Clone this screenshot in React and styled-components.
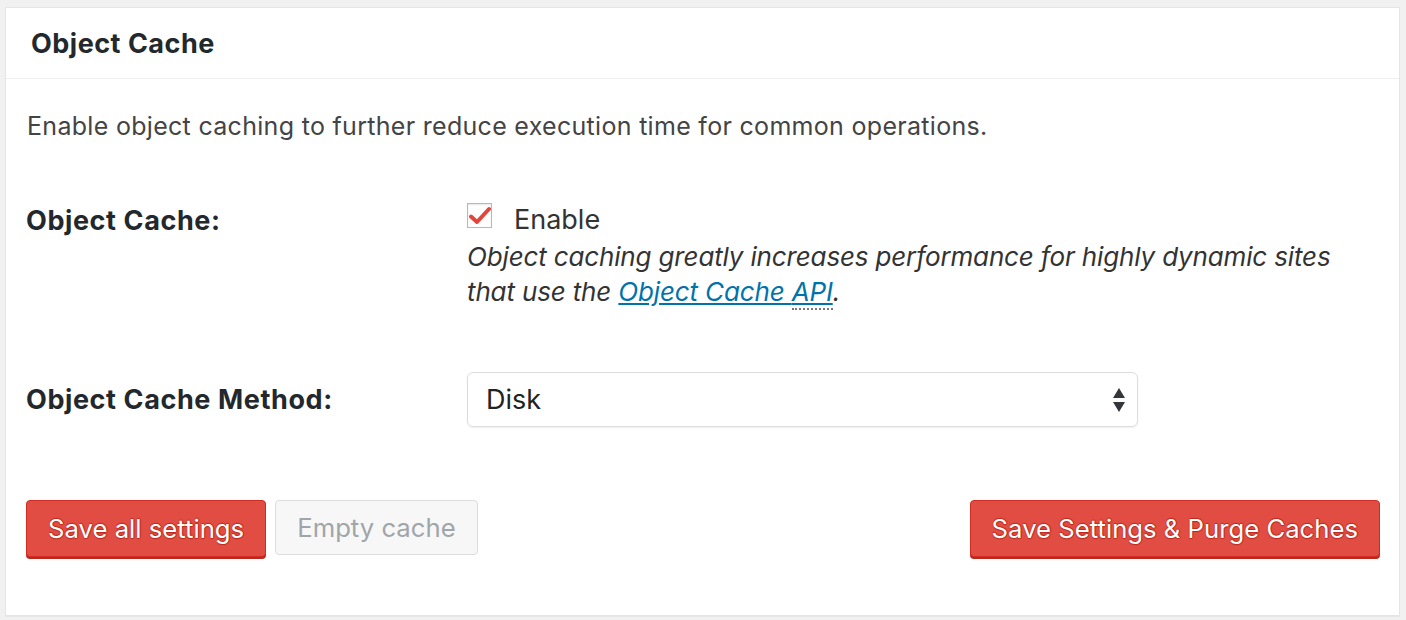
import React from 'react';
import styled, { createGlobalStyle } from 'styled-components';

const GlobalStyle = createGlobalStyle`
  html, body {
    margin: 0;
    padding: 0;
    background: #f1f1f1;
  }
  body {
    font-family: Inter, "Noto Sans", "Liberation Sans", sans-serif;
    color: #23282d;
  }
`;

const Page = styled.div`
  padding: 7px 6px 4px 5px;
`;

const Panel = styled.div`
  height: 609px;
  box-sizing: border-box;
  background: #fff;
  border: 1px solid #e5e5e5;
  box-shadow: 0 1px 1px rgba(0, 0, 0, 0.04);
  display: flex;
  flex-direction: column;
`;

const Header = styled.div`
  height: 71px;
  box-sizing: border-box;
  border-bottom: 1px solid #eeeeee;
  display: flex;
  align-items: center;
  padding-left: 25px;
`;

const Title = styled.h2`
  margin: 0;
  font-size: 27px;
  letter-spacing: 0.5px;
  font-weight: 700;
  color: #23282d;
`;

const Body = styled.div`
  padding: 0 19px 0 20px;
  display: flex;
  flex-direction: column;
`;

const Intro = styled.p`
  margin: 32px 0 0 1px;
  font-size: 25px;
  letter-spacing: 0.3px;
  line-height: 30px;
  color: #444;
`;

const FormRow = styled.div`
  display: grid;
  grid-template-columns: 441px 1fr;
  margin-top: ${({ gap }) => gap}px;
`;

const Label = styled.div`
  padding-top: ${({ offset }) => offset}px;
  font-size: 27px;
  letter-spacing: 0.6px;
  font-weight: 700;
  color: #23282d;
`;

const Field = styled.div`
  display: flex;
  flex-direction: column;
`;

const CheckLine = styled.label`
  display: flex;
  align-items: center;
  gap: 22px;
  font-size: 27px;
  color: #333;
`;

const Box = styled.span`
  width: 25px;
  height: 25px;
  margin-bottom: 8px;
  box-sizing: border-box;
  border: 1px solid #b4b9be;
  background: #fff;
  box-shadow: inset 0 1px 2px rgba(0, 0, 0, 0.1);
  display: flex;
  align-items: center;
  justify-content: center;
`;

const Hint = styled.p`
  margin: 3px 0 0;
  font-size: 26px;
  letter-spacing: -0.15px;
  font-style: italic;
  line-height: 35px;
  color: #333;
  max-width: 880px;
`;

const Link = styled.a`
  color: #0073aa;
  text-decoration: underline;
`;

const Abbr = styled.abbr`
  text-decoration: none;
  border-bottom: 2px dotted #777;
  padding-bottom: 1px;
`;

const Select = styled.div`
  width: 671px;
  height: 55px;
  box-sizing: border-box;
  border: 1px solid #dddddd;
  border-radius: 6px;
  box-shadow: 0 1px 2px rgba(0, 0, 0, 0.07);
  display: flex;
  align-items: center;
  justify-content: space-between;
  padding: 0 11px 0 18px;
  font-size: 27px;
  color: #222;
`;

const Actions = styled.div`
  display: flex;
  align-items: flex-start;
  gap: 9px;
  margin-top: 73px;
`;

const Button = styled.button`
  height: ${({ primary }) => (primary ? 57 : 55)}px;
  padding: 0 21px;
  box-sizing: border-box;
  border-radius: 4px;
  font-family: inherit;
  font-size: 25.7px;
  cursor: pointer;
  background: ${({ primary }) => (primary ? '#e14d43' : '#f7f7f7')};
  border: 1px solid ${({ primary }) => (primary ? '#d02c21' : '#dddddd')};
  color: ${({ primary }) => (primary ? '#fff' : '#a0a5aa')};
  box-shadow: ${({ primary }) => (primary ? '0 2px 0 #ba281e' : 'none')};
  text-shadow: ${({ primary }) =>
    primary ? '0 -1px 1px #ba281e, 1px 0 1px #ba281e, 0 1px 1px #ba281e' : 'none'};
  margin-left: ${({ push }) => (push ? 'auto' : '0')};
`;

const Arrows = () => (
  <svg width="14" height="26" viewBox="0 0 14 26">
    <path d="M7 1 L13 11 L1 11 Z" fill="#32373c" />
    <path d="M1 15 L13 15 L7 25 Z" fill="#32373c" />
  </svg>
);

const Tick = () => (
  <svg width="22" height="20" viewBox="0 0 22 20">
    <path
      d="M2 10.5 L8 16 L20 3"
      fill="none"
      stroke="#e2453c"
      strokeWidth="4"
      strokeLinecap="round"
      strokeLinejoin="round"
    />
  </svg>
);

export default function App() {
  return (
    <>
      <GlobalStyle />
      <Page>
        <Panel>
          <Header>
            <Title>Object Cache</Title>
          </Header>
          <Body>
            <Intro>Enable object caching to further reduce execution time for common operations.</Intro>
            <FormRow gap={62}>
              <Label offset={1}>Object Cache:</Label>
              <Field>
                <CheckLine>
                  <Box>
                    <Tick />
                  </Box>
                  Enable
                </CheckLine>
                <Hint>
                  Object caching greatly increases performance for highly dynamic sites that use the{' '}
                  <Link href="#">
                    Object Cache <Abbr title="Application Programming Interface">API</Abbr>
                  </Link>
                  .
                </Hint>
              </Field>
            </FormRow>
            <FormRow gap={63}>
              <Label offset={11}>Object Cache Method:</Label>
              <Field>
                <Select>
                  Disk
                  <Arrows />
                </Select>
              </Field>
            </FormRow>
            <Actions>
              <Button primary>Save all settings</Button>
              <Button>Empty cache</Button>
              <Button primary push>
                Save Settings &amp; Purge Caches
              </Button>
            </Actions>
          </Body>
        </Panel>
      </Page>
    </>
  );
}
